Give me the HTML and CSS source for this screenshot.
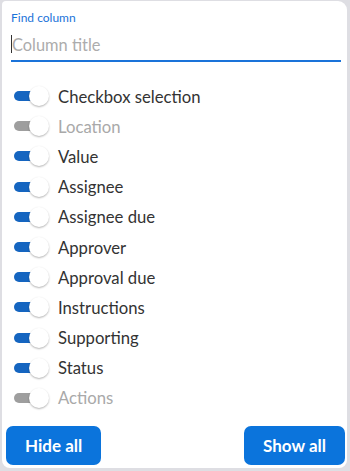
FILE: index.html
```html
<!DOCTYPE html>
<html>
<head>
  <link rel="stylesheet" href="styles.css">
</head>
<body>
  <div class="panel">
    <div class="search">
      <label class="search-label">Find column</label>
      <div class="search-box"><span class="caret"></span><span class="placeholder">Column title</span></div>
    </div>
    <div class="columns">
      <div class="row"><span class="toggle on"><span class="thumb"></span></span><span class="name">Checkbox selection</span></div>
      <div class="row off"><span class="toggle"><span class="thumb"></span></span><span class="name">Location</span></div>
      <div class="row"><span class="toggle on"><span class="thumb"></span></span><span class="name">Value</span></div>
      <div class="row"><span class="toggle on"><span class="thumb"></span></span><span class="name">Assignee</span></div>
      <div class="row"><span class="toggle on"><span class="thumb"></span></span><span class="name">Assignee due</span></div>
      <div class="row"><span class="toggle on"><span class="thumb"></span></span><span class="name">Approver</span></div>
      <div class="row"><span class="toggle on"><span class="thumb"></span></span><span class="name">Approval due</span></div>
      <div class="row"><span class="toggle on"><span class="thumb"></span></span><span class="name">Instructions</span></div>
      <div class="row"><span class="toggle on"><span class="thumb"></span></span><span class="name">Supporting</span></div>
      <div class="row"><span class="toggle on"><span class="thumb"></span></span><span class="name">Status</span></div>
      <div class="row off"><span class="toggle"><span class="thumb"></span></span><span class="name">Actions</span></div>
    </div>
    <div class="footer">
      <button class="button">Hide all</button>
      <button class="button">Show all</button>
    </div>
  </div>
</body>
</html>
```

FILE: styles.css
```css
body {
  margin: 0;
  padding: 0;
  background-color: #dedee3;
  font-family: Lato, "Open Sans", sans-serif;
}

.panel {
  margin: 1px 3px 3px 2px;
  height: 467px;
  box-sizing: border-box;
  background-color: #ffffff;
  border-radius: 4px 9px 8px 8px;
  display: flex;
  flex-direction: column;
}

.search {
  padding: 9px 6px 0 9px;
}

.search-label {
  display: block;
  font-size: 12px;
  line-height: 15px;
  color: #1a73d9;
}

.search-box {
  display: flex;
  align-items: center;
  height: 35px;
  border-bottom: 2px solid #1a73d9;
}

.caret {
  width: 1px;
  height: 18px;
  background-color: #333333;
  margin-top: 3px;
}

.placeholder {
  font-size: 16.4px;
  color: #acacac;
  margin-top: 4px;
}

.columns {
  padding: 19px 0 0 12px;
}

.row {
  display: flex;
  align-items: center;
  height: 30.2px;
}

.toggle {
  position: relative;
  width: 35px;
  height: 20px;
  margin-right: 9px;
}

.toggle::before {
  content: "";
  position: absolute;
  left: 0;
  top: 5px;
  width: 26px;
  height: 10px;
  border-radius: 5px;
  background-color: #9e9e9e;
}

.toggle.on::before {
  background-color: #1565c0;
}

.thumb {
  position: absolute;
  left: 15px;
  top: 0;
  width: 20px;
  height: 20px;
  border-radius: 50%;
  background-color: #ffffff;
  box-shadow: 0 1px 2px rgba(0, 0, 0, 0.3);
}

.name {
  font-size: 16.7px;
  color: #333333;
  margin-top: 1px;
}

.footer {
  margin-top: auto;
  padding: 0 2px 3px 4px;
  display: flex;
  justify-content: space-between;
}

.row.off .name {
  color: #a9a9a9;
}

.button {
  height: 39px;
  padding: 0 19px;
  border: none;
  border-radius: 7px;
  background-color: #0b74dc;
  color: #ffffff;
  font-family: Lato, "Open Sans", sans-serif;
  font-weight: bold;
  font-size: 17px;
  cursor: pointer;
}
```
